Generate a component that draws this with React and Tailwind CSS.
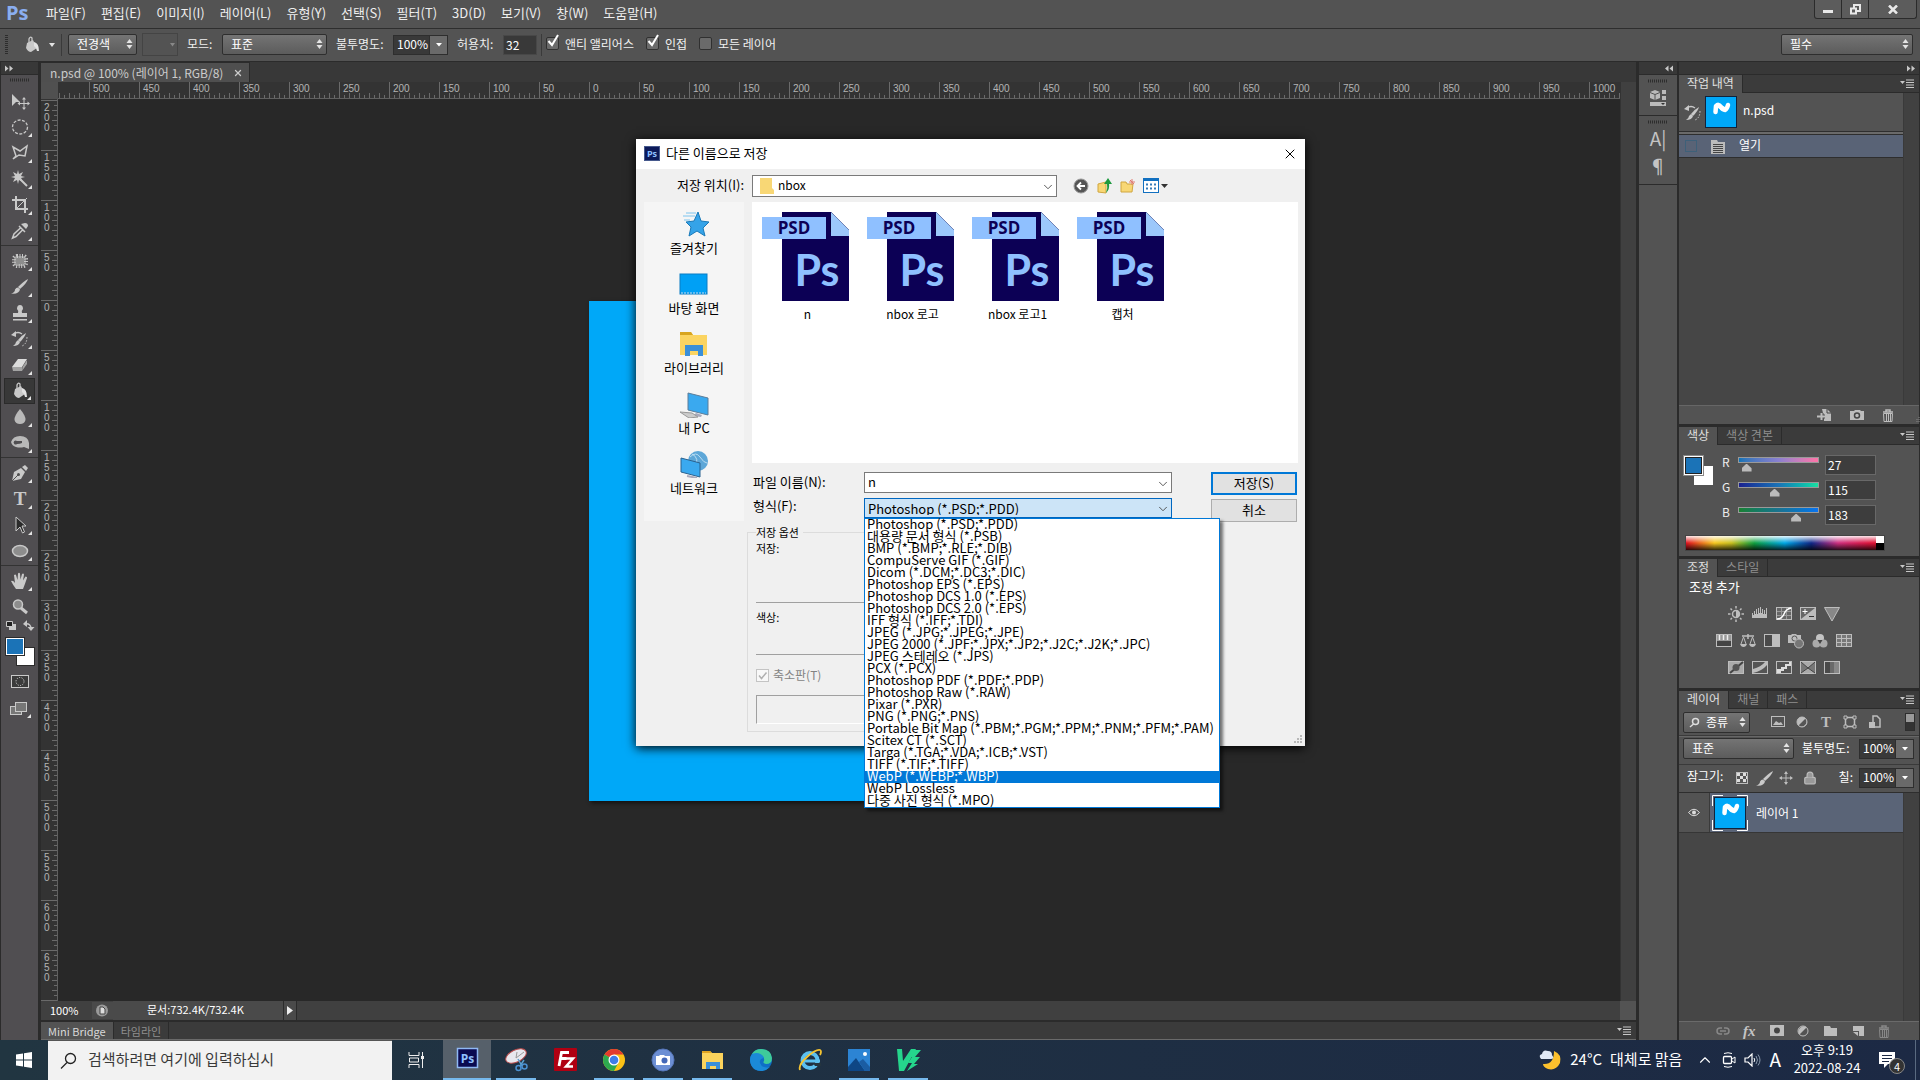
import { useState } from 'react'
import { ChevronDown, ChevronUp, Lock, X } from 'lucide-react'

const menus = ['파일(F)', '편집(E)', '이미지(I)', '레이어(L)', '유형(Y)', '선택(S)', '필터(T)', '3D(D)', '보기(V)', '창(W)', '도움말(H)']

const formats = [
  'Photoshop (*.PSD;*.PDD)',
  '대용량 문서 형식 (*.PSB)',
  'BMP (*.BMP;*.RLE;*.DIB)',
  'CompuServe GIF (*.GIF)',
  'Dicom (*.DCM;*.DC3;*.DIC)',
  'Photoshop EPS (*.EPS)',
  'Photoshop DCS 1.0 (*.EPS)',
  'Photoshop DCS 2.0 (*.EPS)',
  'IFF 형식 (*.IFF;*.TDI)',
  'JPEG (*.JPG;*.JPEG;*.JPE)',
  'JPEG 2000 (*.JPF;*.JPX;*.JP2;*.J2C;*.J2K;*.JPC)',
  'JPEG 스테레오 (*.JPS)',
  'PCX (*.PCX)',
  'Photoshop PDF (*.PDF;*.PDP)',
  'Photoshop Raw (*.RAW)',
  'Pixar (*.PXR)',
  'PNG (*.PNG;*.PNS)',
  'Portable Bit Map (*.PBM;*.PGM;*.PPM;*.PNM;*.PFM;*.PAM)',
  'Scitex CT (*.SCT)',
  'Targa (*.TGA;*.VDA;*.ICB;*.VST)',
  'TIFF (*.TIF;*.TIFF)',
  'WebP (*.WEBP;*.WBP)',
  'WebP Lossless',
  '다중 사진 형식 (*.MPO)',
]

/* ---------- small shared pieces ---------- */

const Svg = ({ w = 20, h = 20, children, className = '' }) => (
  <svg width={w} height={h} viewBox={`0 0 ${w} ${h}`} fill="none" className={`shrink-0 ${className}`} aria-hidden="true">
    {children}
  </svg>
)

const Grip = ({ vertical = false }) =>
  vertical ? (
    <Svg w={3} h={20}>
      <path d="M1.500 0v20" stroke="#2d2d2d" strokeWidth="3" strokeDasharray="1 1" />
    </Svg>
  ) : (
    <Svg w={20} h={4}>
      <path d="M0 2h20" stroke="#2d2d2d" strokeWidth="3" strokeDasharray="1 1" />
    </Svg>
  )

const DoubleArrow = ({ left = false }) => (
  <Svg w={8} h={7} className={left ? 'rotate-180' : ''}>
    <path d="M0 0.500l3.500 3-3.500 3zM4.500 0.500l3.500 3-3.500 3z" fill="#c8c8c8" />
  </Svg>
)

const UpDown = () => (
  <Svg w={7} h={10} className="pointer-events-none absolute right-1 top-[5px]">
    <path d="M3.500 0L6.500 4h-6zM3.500 10L0.500 6h6z" fill="#e4e4e4" />
  </Svg>
)

const DarkSelect = ({ label, value, className = '', pad = 'pl-2' }) => (
  <div className={`relative h-[21px] ${className}`}>
    <select
      aria-label={label}
      className={`h-full w-full appearance-none rounded-[2px] border border-[#2e2e2e] bg-linear-to-b from-[#747474] to-[#5c5c5c] ${pad} pb-0.5 pr-3 text-[12px] text-white outline-none`}
    >
      <option>{value}</option>
    </select>
    <UpDown />
  </div>
)

const PercentBox = ({ label, value }) => (
  <div className="flex h-[20px] w-[55px] border border-[#2e2e2e]">
    <input aria-label={label} defaultValue={value} className="w-[35px] bg-[#393939] pb-px pl-[3px] text-[12px] text-white outline-none" />
    <button aria-label={`${label} 조절`} className="flex flex-1 items-center justify-center border-l border-[#2e2e2e] bg-[#6a6a6a]">
      <Svg w={6} h={4}>
        <path d="M0 0h6L3 3.500z" fill="#fff" />
      </Svg>
    </button>
  </div>
)

const DarkCheck = ({ id, label, checked }) => (
  <div className="flex items-center gap-1.5">
    <span className="relative h-[13px] w-[13px]">
      <input
        id={id}
        type="checkbox"
        defaultChecked={checked}
        className="peer block h-[13px] w-[13px] appearance-none rounded-[2px] border border-[#303030] bg-[#6a6a6a]"
      />
      <svg width="15" height="14" viewBox="0 0 15 14" className="pointer-events-none absolute -top-1 left-0 hidden peer-checked:block">
        <path d="M2.500 8l3.500 4 6-10" stroke="#fff" strokeWidth="2" fill="none" />
      </svg>
    </span>
    <label htmlFor={id}>{label}</label>
  </div>
)

const PanelMenu = () => (
  <button aria-label="패널 메뉴" className="ml-auto mr-[5px] flex items-center">
    <Svg w={14} h={9}>
      <path d="M0 2h5L2.500 5z" fill="#c8c8c8" />
      <path d="M6 1h8M6 3.500h8M6 6h8M6 8.500h8" stroke="#c8c8c8" />
    </Svg>
  </button>
)

const PanelTabs = ({ tabs }) => (
  <div className="flex h-[18px] shrink-0 bg-[#3b3b3b]">
    {tabs.map((t, i) => (
      <button
        key={t}
        className={`border-r border-[#2b2b2b] px-2 text-[12px] leading-4 ${i === 0 ? 'bg-[#535353] pb-0.5 text-[#e0e0e0]' : 'border-b pb-px text-[#8f8f8f]'}`}
      >
        {t}
      </button>
    ))}
    <div className="flex flex-1 border-b border-[#2b2b2b]">
      <PanelMenu />
    </div>
  </div>
)

const Thumb = () => (
  <Svg w={32} h={32}>
    <rect x="0.500" y="0.500" width="31" height="31" fill="#00a8f8" stroke="#10233c" />
    <path d="M10.500 16l.500-6q2.500-2.500 4.500.500 2 3.500 4.500 3.500 2-1 3-5" stroke="#fff" strokeWidth="4.500" strokeLinecap="round" strokeLinejoin="round" />
    <path d="M13 7l7 4v5l-7-4z" fill="#fff" />
  </Svg>
)

/* ---------- tool icons ---------- */

const Bucket = () => (
  <>
    <path d="M5 8l6-3 4 8-6 4q-3 0-5-4z" fill="#c9c9c9" />
    <path d="M7 9V4q1-3 3-1v6" stroke="#c9c9c9" strokeWidth="1.300" />
    <path d="M12 7q5 1 5 9h-2q0-3-3-5z" fill="#e3e3e3" />
  </>
)

const Brush = () => (
  <>
    <path d="M18 2q-1 4-8 10l-2-2Q14 4 18 2z" fill="#c9c9c9" />
    <path d="M8 10.500l2 2q-1 5-9 4 4-1 4-4 1-2 3-2z" fill="#c9c9c9" />
  </>
)

const HistoryBrush = () => (
  <>
    <path d="M16 4q-1 4-6 9l-2-2q4-5 8-7z" fill="#c9c9c9" />
    <path d="M8 11l2 2q-1 4-7 4 3-2 3-4z" fill="#c9c9c9" />
    <path d="M4 5q4-3 8 0" stroke="#c9c9c9" strokeWidth="1.500" />
    <path d="M1 6l5-4v6z" fill="#c9c9c9" />
    <path d="M17 8q0 7-5 9" stroke="#c9c9c9" strokeDasharray="1.500 1.500" />
  </>
)

const tools = [
  { name: '이동', icon: <><path d="M2 3l8 8H6l-4 4z" fill="#c9c9c9" /><path d="M14 8v9M9.500 12.500h9" stroke="#c9c9c9" /><path d="M14 6l2 2.500h-4zM14 19l2-2.500h-4zM7.500 12.500l2.500-2v4zM20 12.500l-2.500-2v4z" fill="#c9c9c9" /></>, plain: true },
  { name: '선택 윤곽', icon: <ellipse cx="10" cy="10" rx="7.500" ry="7" stroke="#c9c9c9" strokeWidth="1.300" strokeDasharray="3 1.500" /> },
  { name: '올가미', icon: <path d="M3 4l7 4 7-5-2 10-6-1-6 4 3-3z" stroke="#c9c9c9" strokeWidth="1.500" /> },
  { name: '자동 선택', icon: <><path d="M8 1l1 4 4-2-2 4 4 1-4 1 2 4-4-2-1 4-1-4-4 2 2-4-4-1 4-1-2-4 4 2z" fill="#c9c9c9" /><path d="M10 10l7 7" stroke="#c9c9c9" strokeWidth="2" /></> },
  { name: '자르기', icon: <><path d="M6 1v13h12M2 5h13v13" stroke="#c9c9c9" strokeWidth="2" /><path d="M7 13L17 3" stroke="#c9c9c9" /></> },
  { name: '스포이드', icon: <><path d="M11 3l5 5 2-3q0-3-3-3z" fill="#c9c9c9" /><path d="M9 5l6 6M11 6.500L4 13l-1.500 4L6 15.500l7-7" stroke="#c9c9c9" strokeWidth="1.500" /></>, end: true },
  { name: '복구', icon: <><rect x="4" y="5" width="12" height="10" rx="3" fill="#8d8d8d" stroke="#c9c9c9" strokeWidth="4" strokeDasharray="1 1.500" /></> },
  { name: '브러시', icon: <Brush /> },
  { name: '도장', icon: <path d="M8 10q1-2-1-4 0-4 3-4t3 4q-2 2-1 4h5v4H3v-4zM3 16h14v1.500H3z" fill="#c9c9c9" /> },
  { name: '작업 내역 브러시', icon: <HistoryBrush /> },
  { name: '지우개', icon: <><path d="M2 12l6-8h9l-5 8z" fill="#dcdcdc" /><path d="M2 12h10v4H3zM12.500 12l4.500-7v4l-5 7z" fill="#a3a3a3" /></> },
  { name: '페인트 통', icon: <Bucket />, active: true },
  { name: '흐림 효과', icon: <path d="M10 2q6 7 5.500 11-1 4-5.500 4t-5.500-4Q4 9 10 2z" fill="#b9b9b9" /> },
  { name: '스펀지', icon: <path fillRule="evenodd" d="M1 9q2-6 9-6 8 0 9 7v6l-5-2q-4 1-8 0-4-1-5-5zm6-1a2 2 0 100 3q3 0 5-1V8z" fill="#b9b9b9" />, end: true },
  { name: '펜', icon: <><path d="M2 18l2-9 7-4 4 4-4 7z" fill="#c9c9c9" /><path d="M12 4l3-2 3 3-2 3z" fill="#c9c9c9" /><path d="M2 18l6-6" stroke="#505050" /><circle cx="8.500" cy="11.500" r="1.500" fill="#505050" /></> },
  { name: '문자', icon: <text x="10" y="16" textAnchor="middle" fontFamily="Liberation Serif" fontWeight="bold" fontSize="19" fill="#c9c9c9">T</text> },
  { name: '패스 선택', icon: <path d="M6 2v14l4-4 2.500 6 2-1-2.500-6h4z" fill="#2b2b2b" stroke="#c9c9c9" /> },
  { name: '타원', icon: <ellipse cx="10" cy="10" rx="7.500" ry="5.500" fill="#8d8d8d" stroke="#c9c9c9" strokeWidth="1.500" />, end: true },
  { name: '손', icon: <path d="M6 18q-3-4-5-8 2-1 4 2L4 4q1.500-1 2 0l1.500 5L8 2.500q1-1.500 2 0l.500 6 1.500-5.500q1.500-1 2 .500L13 9.500l2.500-4q2 0 1.500 1.500-2 6-4 11z" fill="#c9c9c9" /> },
  { name: '돋보기', icon: <><circle cx="8" cy="7.500" r="4.500" fill="#8d8d8d" stroke="#c9c9c9" strokeWidth="1.500" /><path d="M11 11l6 5" stroke="#c9c9c9" strokeWidth="3" /></>, plain: true },
]

const Toolbar = () => (
  <aside className="flex w-[39px] shrink-0 flex-col border-x border-[#2b2b2b] bg-[#504e51]">
    <div className="flex h-[13px] items-center border-b border-[#2b2b2b] bg-[#383838] pl-1">
      <DoubleArrow />
    </div>
    <div className="flex h-[13px] items-start justify-center pt-[3px]">
      <Grip />
    </div>
    {tools.map((t) => (
      <div key={t.name} className={t.end ? 'mb-0.5 border-b border-[#333] pb-px' : ''}>
        <button
          aria-label={t.name}
          className={`relative mx-auto flex h-[26px] w-[31px] items-center justify-center ${t.active ? 'border border-[#2b2b2b] bg-[#383838]' : ''}`}
        >
          <Svg w={20} h={20}>{t.icon}</Svg>
          {!t.plain && (
            <svg width="4" height="4" viewBox="0 0 4 4" className="absolute bottom-[3px] right-[3px]">
              <path d="M4 0v4H0z" fill="#e4e4e4" />
            </svg>
          )}
        </button>
      </div>
    ))}
    <div className="flex flex-col items-center">
      <Svg w={30} h={11}>
        <path d="M4 4h7v6H4z" fill="#c9c9c9" />
        <path d="M1.500 1.500h6v5h-6z" fill="#222" stroke="#c9c9c9" />
        <path d="M20 4q6-1 6 5" stroke="#c9c9c9" strokeWidth="1.500" />
        <path d="M18 4l4-4v7zM22.500 7h7L26 11z" fill="#c9c9c9" />
      </Svg>
      <Svg w={32} h={32} className="mt-1">
        <rect x="12.500" y="12.500" width="18" height="18" fill="#fff" stroke="#2b2b2b" />
        <rect x="1.500" y="2.500" width="19" height="18" fill="#fff" stroke="#2b2b2b" />
        <rect x="3" y="4" width="16" height="15" fill="#1b73b7" />
      </Svg>
      <Svg w={18} h={13} className="mt-2">
        <rect x="0.500" y="0.500" width="17" height="12" fill="#3b3b3b" stroke="#c9c9c9" />
        <circle cx="9" cy="6.500" r="4" stroke="#e4e4e4" strokeDasharray="1 1.500" />
      </Svg>
      <Svg w={22} h={16} className="mt-3.5">
        <rect x="1.500" y="4.500" width="11" height="8" fill="#777" stroke="#c9c9c9" />
        <rect x="6.500" y="0.500" width="11" height="9" fill="#777" stroke="#c9c9c9" />
        <path d="M22 12v4h-4z" fill="#e4e4e4" />
      </Svg>
    </div>
  </aside>
)

/* ---------- top bars ---------- */

const MenuBar = () => (
  <header className="flex h-[29px] shrink-0 items-start border-b border-[#2e2e2e] bg-[#535353]">
    <span className="w-[46px] pl-1.5 font-['Open_Sans',sans-serif] text-[20px] font-bold leading-[25px] text-[#8aaef0]">Ps</span>
    <nav className="flex gap-[15px]">
      {menus.map((m) => (
        <button key={m} className="text-[13px] leading-[25px] text-[#eee]">{m}</button>
      ))}
    </nav>
    <div className="ml-auto mr-[3px] flex h-[19px] rounded-b-[3px] border border-t-0 border-[#2b2b2b] bg-[#5c5c5c]">
      <button aria-label="최소화" className="flex w-[27px] items-center justify-center border-r border-[#2b2b2b]">
        <Svg w={12} h={10}><path d="M1 6h10v3H1z" fill="#e8e8e8" /></Svg>
      </button>
      <button aria-label="이전 크기로" className="flex w-[27px] items-center justify-center border-r border-[#2b2b2b]">
        <Svg w={13} h={11}>
          <path d="M5 1h6v6H5z" stroke="#e8e8e8" strokeWidth="2" />
          <path d="M2 4.500h5v5H2z" fill="#5c5c5c" stroke="#e8e8e8" strokeWidth="2" />
        </Svg>
      </button>
      <button aria-label="닫기" className="flex w-[47px] items-center justify-center">
        <Svg w={10} h={9}><path d="M1 0.500l8 8M9 0.500l-8 8" stroke="#e8e8e8" strokeWidth="2.500" /></Svg>
      </button>
    </div>
  </header>
)

const OptionsBar = () => (
  <div className="flex h-[33px] shrink-0 items-center border-b border-[#2b2b2b] bg-[#535353] pb-px pl-[5px] text-[12px] text-[#f0f0f0]">
    <Grip vertical />
    <button aria-label="페인트 통 도구" className="ml-3.5 flex w-[33px] items-center justify-between">
      <Svg w={20} h={20}><Bucket /></Svg>
      <Svg w={6} h={4}><path d="M0 0h6L3 4z" fill="#e4e4e4" /></Svg>
    </button>
    <div className="mx-1.5 h-[22px] w-px bg-[#3a3a3a]" />
    <DarkSelect label="칠 소스" value="전경색" className="w-[69px]" />
    <div className="ml-[5px] flex h-[23px] w-[36px] items-center justify-end border border-[#444] pr-0.5">
      <Svg w={5} h={4}><path d="M0 0h5L2.500 3.500z" fill="#888" /></Svg>
    </div>
    <span className="ml-[9px] w-[35px] pb-0.5">모드:</span>
    <DarkSelect label="모드" value="표준" className="w-[105px]" />
    <span className="ml-[9px] w-[57px] pb-0.5">불투명도:</span>
    <PercentBox label="불투명도" value="100%" />
    <label htmlFor="tolerance" className="ml-[9px] w-[46px] pb-0.5">허용치:</label>
    <input id="tolerance" defaultValue="32" className="h-[20px] w-[34px] border border-[#484848] bg-[#393939] pl-0.5 text-[12px] text-white outline-none" />
    <div className="mx-1 h-[22px] w-px bg-[#3a3a3a]" />
    <div className="flex gap-3 pb-0.5">
      <DarkCheck id="aa" label="앤티 앨리어스" checked />
      <DarkCheck id="contig" label="인접" checked />
      <DarkCheck id="all-layers" label="모든 레이어" />
    </div>
    <DarkSelect label="작업 영역" value="필수" className="ml-auto mr-[7px] w-[132px]" />
  </div>
)

/* ---------- document window ---------- */

const hLabels = Array.from({ length: 31 }, (_, i) => Math.abs(i * 50 - 500))
const vLabels = Array.from({ length: 18 }, (_, i) => Math.abs(i * 50 - 200))

const RulerX = () => (
  <div className="relative h-[17px] flex-1 overflow-hidden border-b border-[#606060] bg-[#333]">
    <svg className="absolute inset-0 h-full w-full" aria-hidden="true">
      <pattern id="rx" x="31" width="50" height="17" patternUnits="userSpaceOnUse">
        <path d="M0.500 0v17" stroke="#6a6a6a" />
        <path d="M10.500 11v6M20.500 11v6M30.500 11v6M40.500 11v6M5.500 13v4M15.500 13v4M25.500 13v4M35.500 13v4M45.500 13v4" stroke="#6a6a6a" />
      </pattern>
      <rect width="100%" height="100%" fill="url(#rx)" />
    </svg>
    <div className="relative flex pl-[31px] font-['Liberation_Sans',sans-serif]">
      {hLabels.map((n, i) => (
        <span key={i} className="w-[50px] shrink-0 pl-1 text-[10px] leading-[14px] text-[#b4b4b4]">{n}</span>
      ))}
    </div>
  </div>
)

const RulerY = () => (
  <div className="relative w-[17px] shrink-0 overflow-hidden border-r border-[#606060] bg-[#333]">
    <svg className="absolute inset-0 h-full w-full" aria-hidden="true">
      <pattern id="ry" y="1" width="17" height="50" patternUnits="userSpaceOnUse">
        <path d="M0 0.500h17" stroke="#6a6a6a" />
        <path d="M11 10.500h6M11 20.500h6M11 30.500h6M11 40.500h6M13 5.500h4M13 15.500h4M13 25.500h4M13 35.500h4M13 45.500h4" stroke="#6a6a6a" />
      </pattern>
      <rect width="100%" height="100%" fill="url(#ry)" />
    </svg>
    <div className="relative pt-px font-['Liberation_Sans',sans-serif]">
      {vLabels.map((n, i) => (
        <div key={i} className="flex h-[50px] flex-col pl-[3px] pt-[3px] text-[10px] leading-[10px] text-[#b4b4b4]">
          {String(n).split('').map((d, j) => <span key={j}>{d}</span>)}
        </div>
      ))}
    </div>
  </div>
)

const DocumentArea = () => (
  <main className="ml-[2px] flex min-w-0 flex-1 flex-col bg-[#2b2b2b]">
    <div className="flex h-[20px] shrink-0 bg-[#383838]">
      <div className="flex items-center gap-2.5 border-r border-t border-[#2b2b2b] bg-[#4f4f4f] pl-[9px] pr-1.5 text-[12px] text-[#ccc]">
        <span className="whitespace-nowrap">n.psd @ 100% (레이어 1, RGB/8)</span>
        <button aria-label="탭 닫기" className="flex"><X className="h-2.5 w-2.5" strokeWidth={3} /></button>
      </div>
    </div>
    <div className="flex min-h-0 flex-1">
      <div className="flex min-w-0 flex-1 flex-col">
        <div className="flex">
          <div className="h-[17px] w-[17px] bg-[#505050]" />
          <RulerX />
        </div>
        <div className="flex min-h-0 flex-1">
          <RulerY />
          <div className="relative flex-1 overflow-hidden bg-[#282828]">
            <div className="absolute left-[531px] top-[202px] h-[500px] w-[500px] bg-[#00a8f8] shadow-[2px_2px_4px_#111]" />
          </div>
        </div>
      </div>
      <div className="w-4 border-l border-[#333] bg-[#404040]" />
    </div>
    <div className="flex h-[19px] shrink-0 items-center bg-[#404040] text-[11px] text-white">
      <span className="w-[51px] pl-[9px]">100%</span>
      <Svg w={21} h={17} className="bg-[#4a4a4a]">
        <circle cx="10" cy="8.500" r="6" fill="#9a9a9a" />
        <path d="M8 5h3l2 2v5H8z" fill="#ddd" stroke="#444" />
      </Svg>
      <span className="h-full w-[171px] border-r border-[#2b2b2b] bg-[#4a4a4a] pl-[34px] leading-[17px]">문서:732.4K/732.4K</span>
      <button aria-label="상태 메뉴" className="flex h-full w-[13px] items-center justify-center border-r border-[#2b2b2b] bg-[#4a4a4a]">
        <Svg w={6} h={9}><path d="M0 0l6 4.500L0 9z" fill="#eee" /></Svg>
      </button>
      <div className="ml-auto h-full w-4 bg-[#535353]" />
    </div>
    <div className="mt-0.5 flex h-[18px] shrink-0 border-b border-[#6a6a6a] bg-[#3b3b3b] text-[11px]">
      <button className="bg-[#535353] px-[7px] leading-[14px] text-[#d8d8d8]">Mini Bridge</button>
      <button className="border-x border-[#2b2b2b] px-[7px] leading-[14px] text-[#8f8f8f]">타임라인</button>
      <PanelMenu />
    </div>
  </main>
)

/* ---------- right side ---------- */

const IconStrip = () => (
  <div className="ml-[3px] w-[38px] shrink-0 bg-[#535353]">
    <div className="flex h-[13px] items-center justify-end border-b border-[#2b2b2b] bg-[#383838] pr-1">
      <DoubleArrow left />
    </div>
    <div className="flex h-[41px] flex-col items-center border-b border-[#2b2b2b] pt-1">
      <Grip />
      <button aria-label="속성" className="mt-1.5">
        <Svg w={16} h={18}>
          <path d="M5 1l5 2v6l-5 2-5-2V3z" fill="#bbb" />
          <path d="M0 3.500l5 2 5-2M5 5.500V11" stroke="#535353" />
          <path d="M12 1h4v4h-4zM12 7h4v4h-4zM0 13h16v4H0z" fill="#bbb" />
          <path d="M11 14h4l-2 2z" fill="#333" />
        </Svg>
      </button>
    </div>
    <div className="flex h-[69px] flex-col items-center border-b border-[#2b2b2b] pt-1">
      <Grip />
      <button aria-label="문자" className="text-[19px] leading-[28px] text-[#c4c4c4]">A|</button>
      <button aria-label="단락" className="text-[19px] leading-[28px] text-[#c4c4c4]">¶</button>
    </div>
  </div>
)

const Trash = ({ color = '#bdbdbd' }) => (
  <Svg w={12} h={13}>
    <path d="M1 3h10M4 2.500V1h4v1.500" stroke={color} strokeWidth="1.500" />
    <path d="M1.500 4.500h9L10 12.500H2zM4.500 5v7M6.500 5v7M8.500 5v7" stroke={color} />
  </Svg>
)

const HistoryPanel = () => (
  <section className="flex flex-col">
    <PanelTabs tabs={['작업 내역']} />
    <div className="flex">
      <div className="flex h-[312px] flex-1 flex-col bg-[#464646]">
        <div className="flex h-[39px] items-center border-b border-[#2e2e2e] bg-[#535353] pl-1 text-[12px] text-white">
          <Svg w={18} h={18}><HistoryBrush /></Svg>
          <span className="ml-1"><Thumb /></span>
          <span className="ml-1.5 pb-1">n.psd</span>
        </div>
        <div className="h-[2px] bg-[#6a6a6a]" />
        <div className="flex h-[24px] items-center border-y border-[#2e2e2e] bg-[#596376] pl-1.5 text-[12px] text-white">
          <input type="checkbox" aria-label="작업 내역 브러시 소스" className="h-3 w-3 appearance-none border border-[#3e6079]" />
          <Svg w={14} h={15} className="ml-3.5">
            <path d="M0 1h6l1 2h7v12H0z" fill="#bbb" />
            <path d="M2 5.500h10M2 7.500h10M2 9.500h10M2 11.500h10M2 13.500h10" stroke="#444" />
          </Svg>
          <span className="ml-3.5 pb-0.5">열기</span>
        </div>
      </div>
      <div className="w-4 border-l border-[#3a3a3a] bg-[#414141]" />
    </div>
    <div className="flex h-[19px] items-center gap-[18px] border-t border-[#666] pl-[138px]">
      <Svg w={15} h={13}>
        <path d="M5 0h5l4 4v8H7V8" fill="#bdbdbd" />
        <path d="M10 0v4h4" stroke="#444" />
        <path d="M0 7.500h8M4.500 4v7" stroke="#535353" strokeWidth="4" />
        <path d="M0 7.500h8M4.500 4v7" stroke="#bdbdbd" strokeWidth="2" />
      </Svg>
      <Svg w={14} h={12}>
        <path d="M0 2h4l1-1h5l1 1h3v9H0z" fill="#bdbdbd" />
        <circle cx="7" cy="6.500" r="2.500" stroke="#444" strokeWidth="1.500" />
      </Svg>
      <Trash />
      <Svg w={10} h={10} className="ml-0.5 mt-1">
        <path d="M9 1v9M7 3v7M5 5v5M3 7v3" stroke="#888" strokeDasharray="1 1" />
      </Svg>
    </div>
  </section>
)

const channels = [
  { name: 'R', value: 27, track: 'from-[#0a73b7] via-[#8a80d0] to-[#ff73a7]' },
  { name: 'G', value: 115, track: 'from-[#1b2090] via-[#1b73b7] to-[#1be0a0]' },
  { name: 'B', value: 183, track: 'from-[#1b8030] via-[#1b7390] to-[#0b73f0]' },
]

const ColorPanel = () => (
  <section>
    <PanelTabs tabs={['색상', '색상 견본']} />
    <div className="h-[111px]">
      <div className="flex pt-2.5">
        <Svg w={32} h={32} className="ml-1">
          <path d="M11 11h19v19H11z" fill="#fff" />
          <rect x="0.500" y="0.500" width="20" height="20" fill="#fff" stroke="#888" />
          <rect x="2.500" y="2.500" width="16" height="16" fill="#1b73b7" stroke="#222" />
        </Svg>
        <div className="ml-[7px] flex flex-col gap-[5px]">
          {channels.map((c) => (
            <div key={c.name} className="flex h-[20px] text-[12px] leading-[14px] text-[#eee]">
              <label htmlFor={`ch-${c.name}`} className="w-4">{c.name}</label>
              <div className="w-[81px] pt-0.5">
                <div className={`h-[6px] border border-[#999] bg-linear-to-r ${c.track}`} />
                <input
                  id={`ch-${c.name}`}
                  type="range"
                  min="0"
                  max="255"
                  defaultValue={c.value}
                  className="-mx-[5px] block h-[9px] w-[91px] appearance-none bg-transparent [&::-webkit-slider-thumb]:h-[8px] [&::-webkit-slider-thumb]:w-[10px] [&::-webkit-slider-thumb]:appearance-none [&::-webkit-slider-thumb]:bg-[#bbb] [&::-webkit-slider-thumb]:[clip-path:polygon(50%_0,100%_60%,100%_100%,0_100%,0_60%)]"
                />
              </div>
              <input aria-label={`${c.name} 값`} defaultValue={c.value} className="ml-1.5 h-[20px] w-[51px] border border-[#686868] bg-[#3d3d3d] pb-px pl-0.5 text-[12px] text-white outline-none" />
            </div>
          ))}
        </div>
      </div>
      <div className="ml-1.5 mt-[10px] flex h-[16px] w-[200px] border border-[#444]">
        <div className="flex-1 bg-[linear-gradient(to_bottom,#ffffffe6,transparent_50%,#000c),linear-gradient(to_right,#e01020,#f8c820_15%,#c8c020_24%,#10a040_36%,#00a8e8_52%,#102888_66%,#d03080_80%,#e01030)]" />
        <div className="flex w-2 flex-col">
          <div className="flex-1 bg-white" />
          <div className="flex-1 bg-black" />
        </div>
      </div>
    </div>
  </section>
)

const g = '#bdbdbd'
const Box = ({ children, fill = '#666' }) => (
  <>
    <rect x="0.500" y="1.500" width="15" height="12" fill={fill} stroke={g} />
    {children}
  </>
)

const adjustments = [
  [
    <><circle cx="8" cy="8" r="3.500" stroke={g} strokeWidth="1.500" /><path d="M8 4.500a3.500 3.500 0 010 7z" fill={g} /><path d="M8 0v2.500M8 13.500V16M0 8h2.500M13.500 8H16M2.500 2.500l1.500 1.500M12 12l1.500 1.500M2.500 13.500L4 12M12 4l1.500-1.500" stroke={g} strokeWidth="1.500" /></>,
    <path d="M0 12V7h1v2h1V5h1v3h1V3h1v5h1V2h1v5h1V1h1v6h1V3h1v5h1V4h1v4h1V2h1v10z" fill={g} />,
    <Box><path d="M5.500 2v11M10.500 2v11M1 5.500h14M1 9.500h14" stroke="#999" /><path d="M1 13q5 0 7-5t7-6" stroke="#fff" strokeWidth="1.500" /></Box>,
    <Box><path d="M15 2v11H1z" fill={g} /><path d="M2.500 5.500h5M5 3v5" stroke="#fff" /><path d="M9 10.500h5" stroke="#333" /></Box>,
    <path d="M0.500 1.500h15L8 15z" fill="#888" stroke={g} />,
  ],
  [
    <Box fill="#999"><path d="M1 8h14v5H1z" fill="#444" /><path d="M3.500 2v5M7.500 2v5M11.500 2v5" stroke="#eee" strokeWidth="1.500" /></Box>,
    <><path d="M2 3h12M8 1v5" stroke={g} strokeWidth="1.500" /><path d="M3.500 4L1 11M3.500 4L6 11M12.500 4L10 11M12.500 4L15 11" stroke={g} /><path d="M0 11h7q-1 3-3.500 3T0 11zM9 11h7q-1 3-3.500 3T9 11z" fill={g} /></>,
    <Box fill="#4a4a4a"><path d="M8 2h7v11H8z" fill={g} /></Box>,
    <><path d="M0 2h3l1-1h4l1 1h4v8H0z" fill={g} /><circle cx="6.500" cy="5.500" r="2.500" stroke="#555" /><circle cx="11" cy="10.500" r="4.500" fill="#777" stroke={g} /></>,
    <><circle cx="8" cy="5" r="4" fill="#c4c4c4" /><circle cx="4.500" cy="10.500" r="4" fill="#aaa" /><circle cx="11.500" cy="10.500" r="4" fill="#aaa" /><path d="M5.500 7h5L8 11z" fill="#444" /></>,
    <Box fill="#777"><path d="M5.500 2v11M10.500 2v11M1 5.500h14M1 9.500h14" stroke={g} /></Box>,
  ],
  [
    <Box fill="#aaa"><path d="M2 13L15 2" stroke="#444" strokeWidth="2" /><circle cx="8" cy="7.500" r="3.500" fill="#555" /></Box>,
    <Box fill="#555"><path d="M1 9Q9 7 13 2h2v3q-5 6-14 8z" fill={g} /></Box>,
    <Box fill="#555"><path d="M1 9h4V7h4V4h4V2h2v4h-4v3H8v2H5v2H1z" fill="#ddd" /></Box>,
    <Box fill="#777"><path d="M1 2l7 6 7-6M1 13l7-5 7 5" fill="#aaa" stroke="#444" /></Box>,
    <Box fill="#888"><path d="M1 2h5v11H1z" fill="#4a4a4a" /><path d="M6 2h4v11H6z" fill="#6a6a6a" /></Box>,
  ],
]

const AdjustPanel = () => (
  <section>
    <PanelTabs tabs={['조정', '스타일']} />
    <div className="flex h-[111px] flex-col">
      <p className="pl-2.5 text-[13px] leading-5 text-white">조정 추가</p>
      <div className="mr-[30px] mt-[9px] flex flex-col gap-[11px]">
        {adjustments.map((row, i) => (
          <div key={i} className="flex justify-center gap-2">
            {row.map((icon, j) => (
              <button key={j} aria-label={`조정 ${i + 1}-${j + 1}`}><Svg w={16} h={16}>{icon}</Svg></button>
            ))}
          </div>
        ))}
      </div>
    </div>
  </section>
)

const LayersPanel = () => (
  <section className="flex min-h-0 flex-1 flex-col text-[12px] text-white">
    <PanelTabs tabs={['레이어', '채널', '패스']} />
    <div className="flex h-[27px] shrink-0 items-center border-b border-[#3a3a3a] px-1">
      <div className="relative">
        <DarkSelect label="필터 종류" value="종류" className="w-[67px]" pad="pl-[22px]" />
        <svg width="11" height="11" viewBox="0 0 11 11" fill="none" className="pointer-events-none absolute left-1.5 top-[5px]">
          <circle cx="6.500" cy="4.500" r="3" stroke="#ddd" strokeWidth="1.500" />
          <path d="M4.500 7L1 10" stroke="#ddd" strokeWidth="1.500" />
        </svg>
      </div>
      <div className="ml-[21px] flex gap-2.5">
        <Svg w={14} h={14}><rect x="0.500" y="1.500" width="13" height="10" stroke={g} /><path d="M2 10l3-4 3 2 2-1 2 3z" fill={g} /></Svg>
        <Svg w={14} h={14}><circle cx="7" cy="7" r="5" fill={g} /><path d="M3.500 10.500a5 5 0 007-7z" fill="#555" /><circle cx="7" cy="7" r="5" stroke={g} /></Svg>
        <Svg w={14} h={14}><text x="7" y="12" textAnchor="middle" fontFamily="Liberation Serif" fontWeight="bold" fontSize="15" fill={g}>T</text></Svg>
        <Svg w={14} h={14}><path d="M2.500 2.500h9v9h-9z" stroke={g} strokeWidth="1.500" /><path d="M1 1h3v3H1zM10 1h3v3h-3zM1 10h3v3H1zM10 10h3v3h-3z" fill="#555" stroke={g} /></Svg>
        <Svg w={14} h={14}><path d="M6 1h4l3 3v8H6z" stroke={g} strokeWidth="1.500" /><path d="M2 7h6v6H2z" fill={g} /></Svg>
      </div>
      <button aria-label="필터 켜기" className="ml-auto h-[18px] w-[10px] border border-[#2e2e2e] bg-linear-to-b from-[#999] from-50% to-[#333] to-50%" />
    </div>
    <div className="flex h-[28px] shrink-0 items-center border-t border-[#666] pb-1 pl-1 pr-[5px]">
      <DarkSelect label="혼합 모드" value="표준" className="w-[111px]" />
      <span className="ml-2 mr-auto whitespace-nowrap pb-0.5">불투명도:</span>
      <PercentBox label="레이어 불투명도" value="100%" />
    </div>
    <div className="flex h-[29px] shrink-0 items-center border-y border-t-[#3a3a3a] border-b-[#2e2e2e] pb-0.5 pl-2 pr-[5px]">
      <span className="w-[48px] pb-1">잠그기:</span>
      <div className="flex items-center gap-1.5">
        <Svg w={14} h={14}>
          <rect x="1.500" y="1.500" width="11" height="11" fill="#555" stroke={g} />
          <path d="M2 2h3v3H2zM8 2h3v3H8zM5 5h3v3H5zM11 5h1v3h-1zM2 8h3v3H2zM8 8h3v3H8z" fill="#ddd" />
        </Svg>
        <Svg w={18} h={18}><Brush /></Svg>
        <Svg w={14} h={14}>
          <path d="M7 1v12M1 7h12" stroke={g} />
          <path d="M7 0l2 3H5zM7 14l2-3H5zM0 7l3-2v4zM14 7l-3-2v4z" fill={g} />
        </Svg>
        <Lock className="ml-1 h-3.5 w-3.5 text-[#bdbdbd]" fill="#999" />
      </div>
      <span className="ml-auto mr-1.5 pb-0.5">칠:</span>
      <PercentBox label="칠" value="100%" />
    </div>
    <div className="flex min-h-0 flex-1">
      <div className="flex-1 bg-[#464646]">
        <div className="flex h-[40px] items-center border-b border-[#363636] bg-[#5a6477]">
          <button aria-label="레이어 표시" className="flex h-full w-[31px] items-center justify-center border-r border-[#3a3a3a] bg-[#535353]">
            <Svg w={12} h={9}>
              <path d="M0.500 4.500q5.500-6.500 11 0-5.500 6.500-11 0z" stroke="#ddd" />
              <circle cx="6" cy="4.500" r="2" fill="#ddd" />
            </Svg>
          </button>
          <span className="relative ml-0.5 p-0.5">
            <Thumb />
            <svg width="36" height="36" viewBox="0 0 36 36" fill="none" className="absolute inset-0">
              <path d="M0.500 11V0.500H11M25 0.500h10.500V11M35.500 25v10.500H25M11 35.500H0.500V25" stroke="#fff" />
            </svg>
          </span>
          <span className="ml-2">레이어 1</span>
        </div>
      </div>
      <div className="w-4 border-l border-[#3a3a3a] bg-[#414141]" />
    </div>
    <div className="flex h-[19px] shrink-0 items-center gap-[13px] border-t border-[#6a6a6a] pl-[37px]">
      <Svg w={14} h={10}><path d="M6 2H4a3 3 0 000 6h2M8 2h2a3 3 0 010 6H8M4 5h6" stroke="#888" strokeWidth="1.500" /></Svg>
      <span className="w-[14px] font-['Liberation_Serif',serif] text-[15px] font-bold italic leading-4 text-[#c4c4c4]">fx</span>
      <Svg w={14} h={12}><path d="M0 0h14v11H0z" fill={g} /><circle cx="7" cy="5.500" r="3" fill="#444" /></Svg>
      <Svg w={14} h={14}><circle cx="6" cy="7" r="5" stroke={g} /><path d="M2.500 10.500a5 5 0 017-7z" fill={g} /></Svg>
      <Svg w={14} h={12}><path d="M0 1h6l1 2h6v8H0z" fill={g} /></Svg>
      <Svg w={14} h={12}><path d="M2 1h11v10H8V6H2z" fill={g} /><path d="M2 7h5v4z" fill={g} /></Svg>
      <Trash color="#888" />
    </div>
  </section>
)

const Panels = () => (
  <div className="ml-[2px] flex w-[241px] shrink-0 flex-col gap-[3px] border-r border-[#2b2b2b] bg-[#2b2b2b] [&>section]:bg-[#535353]">
    <div>
      <div className="flex h-[13px] items-center justify-end border-b border-[#2b2b2b] bg-[#383838] pr-1">
        <DoubleArrow />
      </div>
      <div className="bg-[#535353]"><HistoryPanel /></div>
    </div>
    <ColorPanel />
    <AdjustPanel />
    <LayersPanel />
  </div>
)

/* ---------- save dialog ---------- */

const PsdFile = ({ name }) => (
  <button className="flex w-[105px] flex-col items-center">
    <svg width="94" height="92" viewBox="0 0 94 92" aria-hidden="true">
      <path d="M21 1h49l18 18v71H21z" fill="#0c0055" />
      <path d="M70 1l18 18v6L69 21z" fill="#070038" />
      <path d="M70 1l18 18v6H70z" fill="#9cc8fb" />
      <rect x="1" y="6" width="64" height="22" fill="#8fc0ff" />
      <text x="33" y="23" textAnchor="middle" fontFamily="Open Sans" fontWeight="bold" fontSize="17" fill="#0c0055">PSD</text>
      <text x="56" y="75" textAnchor="middle" fontFamily="Lato" fontWeight="bold" fontSize="43" fill="#8fc0ff">Ps</text>
    </svg>
    <span className="mt-px text-[12px] leading-5">{name}</span>
  </button>
)

const Monitor = () => (
  <>
    <path d="M10 3l20 5v17l-20-5z" fill="#3aa9ef" stroke="#5c7d99" />
    <path d="M18 23l6 2-1 2-8-1z" fill="#aab" />
  </>
)

const places = [
  { name: '즐겨찾기', icon: <><path d="M20 2l3 9 8 1-6 6 2 8-8-5-8 5 2-9-5-5 8-1z" fill="#35a3e8" stroke="#1979b8" /><path d="M8 3h10M5 6h12M6 10h6" stroke="#7cc4ee" /></> },
  { name: '바탕 화면', icon: <><rect x="2" y="4" width="27" height="20" fill="#00a0f5" stroke="#0b7cc4" /><path d="M3 23h25" stroke="#cde" strokeDasharray="2 1" /></> },
  { name: '라이브러리', icon: <><path d="M2 2h11l2 3h14v20H2z" fill="#fbd461" /><path d="M2 2h11l2 3H2z" fill="#d8a520" /><path d="M7 26V15h18v11h-5v-5h-8v5z" fill="#3a8fd8" /></> },
  { name: '내 PC', icon: <><Monitor /><path d="M2 22l12 1 6 4-9 1z" fill="#ccc" stroke="#999" /></> },
  { name: '네트워크', icon: <><circle cx="20" cy="11" r="10" fill="#5da7d8" /><path d="M12 7q6-6 10 0t7 6M14 4q8 4 3 14" stroke="#b8dcf2" /><path d="M3 8l19 5v14L3 22z" fill="#3aa9ef" stroke="#2b628f" /><path d="M9 26l10 2" stroke="#aab" strokeWidth="2" /></> },
]

const SaveDialog = () => {
  const [format, setFormat] = useState(21)

  return (
    <div role="dialog" aria-label="다른 이름으로 저장" className="absolute left-[636px] top-[139px] flex h-[607px] w-[669px] flex-col bg-[#f0f0f0] text-[13px] text-black shadow-[0_2px_10px_#000]">
      <div className="flex h-[30px] shrink-0 items-center bg-white pl-2 pr-[7px]">
        <Svg w={16} h={16}>
          <rect x="0.500" y="0.500" width="15" height="14" fill="#0c1a5a" stroke="#46598c" />
          <text x="8" y="11" textAnchor="middle" fontFamily="Open Sans" fontWeight="bold" fontSize="9" fill="#8fc0ff">Ps</text>
        </Svg>
        <span className="ml-1.5 pb-0.5">다른 이름으로 저장</span>
        <button aria-label="닫기" className="ml-auto"><X className="h-4 w-4" strokeWidth={1.5} /></button>
      </div>

      <div className="flex h-[33px] shrink-0 items-center">
        <label htmlFor="folder" className="w-[116px] pb-0.5 pr-2 text-right">저장 위치(I):</label>
        <div className="relative h-[22px] w-[305px]">
          <select id="folder" className="h-full w-full appearance-none border border-[#7a7a7a] bg-white pb-0.5 pl-[25px] text-[12px] outline-none">
            <option>nbox</option>
          </select>
          <svg width="14" height="16" viewBox="0 0 14 16" className="pointer-events-none absolute left-2 top-[3px]">
            <path d="M0 0h12v10l2 2v4H0z" fill="#f8d775" />
          </svg>
          <ChevronDown className="pointer-events-none absolute right-0.5 top-[5px] h-3.5 w-3.5 text-[#444]" strokeWidth={1.5} />
        </div>
        <div className="ml-4 flex items-center gap-2">
          <button aria-label="뒤로"><Svg w={16} h={16}><circle cx="8" cy="8" r="7" fill="#555" stroke="#999" /><path d="M12 8H5M8 4.500L4.500 8 8 11.500" stroke="#fff" strokeWidth="1.800" /></Svg></button>
          <button aria-label="상위 폴더"><Svg w={15} h={16}><path d="M1 6l8-2v11l-8-1z" fill="#f8d775" stroke="#d0a640" /><path d="M9 15q2-5 1-9H7l4-6 4 6h-3q1 5-3 9z" fill="#1d9a3e" /></Svg></button>
          <button aria-label="새 폴더"><Svg w={15} h={16}><path d="M1 4h5l1 2h6l-1 8H1z" fill="#f8d775" stroke="#d0a640" /><path d="M12 1v6M9 4h6M10 2l4 4" stroke="#e07a70" /></Svg></button>
          <button aria-label="보기" className="flex items-center gap-0.5">
            <Svg w={16} h={15}>
              <rect x="0.500" y="0.500" width="15" height="14" fill="#fff" stroke="#1270c0" />
              <path d="M0 1.500h16" stroke="#1270c0" strokeWidth="3" />
              <path d="M3 6.500h2M7 6.500h2M11 6.500h2M3 10.500h2M7 10.500h2M11 10.500h2" stroke="#357ab8" strokeWidth="2" />
            </Svg>
            <Svg w={7} h={4}><path d="M0 0h7L3.500 4z" fill="#333" /></Svg>
          </button>
        </div>
      </div>

      <div className="flex min-h-0 flex-1">
        <div className="ml-2 h-[319px] w-[100px] shrink-0 bg-[#f5f5f5] pt-2">
          {places.map((p) => (
            <button key={p.name} className="flex h-[60px] w-full flex-col items-center">
              <Svg w={32} h={28}>{p.icon}</Svg>
              <span className="leading-5">{p.name}</span>
            </button>
          ))}
        </div>

        <div className="ml-px min-w-0 flex-1">
          <div className="ml-[7px] mr-[7px] flex h-[261px] items-start bg-white pl-[3px] pt-[9px]">
            {['n', 'nbox 로고', 'nbox 로고1', '캡처'].map((f) => <PsdFile key={f} name={f} />)}
          </div>

          <div className="mr-2 flex pl-2 pt-[7px]">
            <div className="flex w-[111px] flex-col leading-[24px]">
              <label htmlFor="filename">파일 이름(N):</label>
              <label htmlFor="format">형식(F):</label>
            </div>
            <div className="flex flex-col gap-[5px] pt-[2px]">
              <div className="relative h-[21px] w-[308px]">
                <input id="filename" defaultValue="n" className="h-full w-full border border-[#7a7a7a] bg-white pb-0.5 pl-[3px] text-[13px] outline-none" />
                <ChevronDown className="pointer-events-none absolute right-0.5 top-[5px] h-3.5 w-3.5 text-[#444]" strokeWidth={1.5} />
              </div>
              <div className="relative h-[20px] w-[308px]">
                <select id="format" className="h-full w-full appearance-none border border-[#0067c0] bg-[#cce4f7] pb-0.5 pl-[3px] text-[13px] outline-none">
                  <option>Photoshop (*.PSD;*.PDD)</option>
                </select>
                <ChevronDown className="pointer-events-none absolute right-0.5 top-[4px] h-3.5 w-3.5 text-[#444]" strokeWidth={1.5} />
                <ul role="listbox" aria-label="형식" className="absolute left-0 top-full z-10 w-[356px] border border-[#0078d7] bg-white shadow-[3px_3px_3px_#0008]">
                  {formats.map((f, i) => (
                    <li
                      key={f}
                      role="option"
                      aria-selected={i === format}
                      onMouseEnter={() => setFormat(i)}
                      className={`h-[12px] whitespace-nowrap pl-0.5 text-[13px] leading-[10px] ${i === format ? 'bg-[#0078d7] text-white' : ''}`}
                    >
                      {f}
                    </li>
                  ))}
                </ul>
              </div>
            </div>
            <div className="ml-auto flex w-[86px] flex-col gap-1 pt-[2px]">
              <button className="h-[23px] border-2 border-[#0078d7] bg-[#e1e1e1] pb-1 leading-[17px]">저장(S)</button>
              <button className="h-[23px] border border-[#adadad] bg-[#e1e1e1] pb-0.5 leading-[19px]">취소</button>
            </div>
          </div>

          <fieldset className="ml-0.5 mt-[2px] h-[208px] w-[460px] border border-[#dcdcdc] pl-2 text-[11px]">
            <legend className="pr-1 leading-4">저장 옵션</legend>
            <p className="h-[63px] border-b border-[#a0a0a0] leading-4">저장:</p>
            <p className="h-[52px] border-b border-[#a0a0a0] pt-1.5 leading-4">색상:</p>
            <div className="mt-3 flex items-center gap-1 text-[#838383]">
              <span className="relative h-[13px] w-[13px]">
                <input id="thumbnail" type="checkbox" disabled defaultChecked className="block h-[13px] w-[13px] appearance-none border border-[#c4c4c4] bg-[#f8f8f8]" />
                <svg width="13" height="13" viewBox="0 0 13 13" fill="none" className="pointer-events-none absolute inset-0">
                  <path d="M3 6.500l2.500 3 5-6" stroke="#b0b0b0" strokeWidth="1.500" />
                </svg>
              </span>
              <label htmlFor="thumbnail" className="text-[12px] leading-4">축소판(T)</label>
            </div>
            <div className="mt-3 h-[29px] border border-[#a0a0a0] border-b-white" />
          </fieldset>
        </div>
      </div>
      <svg width="9" height="9" viewBox="0 0 9 9" className="absolute bottom-[2px] right-[2px]">
        <path d="M6 0h2v2H6zM3 3h2v2H3zM6 3h2v2H6zM0 6h2v2H0zM3 6h2v2H3zM6 6h2v2H6z" fill="#b8b8b8" />
      </svg>
    </div>
  )
}

/* ---------- taskbar ---------- */

const apps = [
  { name: 'Photoshop', bar: 'active', icon: <><rect x="2.500" y="1.500" width="20" height="19" fill="#0a0a50" stroke="#8fb8f4" strokeWidth="1.500" /><text x="12.500" y="16" textAnchor="middle" fontFamily="Open Sans" fontWeight="bold" fontSize="12" fill="#8fc0ff">Ps</text></> },
  { name: '캡처 도구', bar: 'open', icon: <><ellipse cx="12" cy="8" rx="11" ry="6" transform="rotate(-25 12 8)" fill="#e8e8ee" stroke="#b94a4a" /><path d="M12 10l8-6M12 10l1-6" stroke="#999" /><path d="M14 11l4 7M20 12l-4 6" stroke="#5aa0d0" strokeWidth="1.500" /><circle cx="14.500" cy="20" r="2.500" stroke="#4a90d0" strokeWidth="1.500" /><circle cx="20.500" cy="18.500" r="2.500" stroke="#4a90d0" strokeWidth="1.500" /></> },
  { name: 'FileZilla', icon: <><rect x="1" y="0" width="23" height="23" rx="1" fill="#b00012" /><path d="M6 18L8.500 4.500H16M7.500 10.500h6" stroke="#fff" strokeWidth="2.800" /><path d="M12 10.500h8l-7 8h7" stroke="#fff" strokeWidth="2.500" /></> },
  { name: 'Chrome', bar: 'open', icon: <><circle cx="12" cy="12" r="11" fill="#fbc116" /><path d="M12 12L2.500 6.500A11 11 0 0121.500 6.500H12z" fill="#e33b2e" /><path d="M12 12L2.500 6.500A11 11 0 0012 23l4.500-8.500z" fill="#2da94f" /><circle cx="12" cy="12" r="5.500" fill="#fff" /><circle cx="12" cy="12" r="4.300" fill="#3f7de8" /></> },
  { name: '카메라', bar: 'open', icon: <><circle cx="12" cy="12" r="11" fill="#6c8fd4" stroke="#5575b8" /><path d="M5 8h3l1-1h4l1 1h5v9H5z" fill="#fff" /><circle cx="13.500" cy="12.500" r="3" fill="#4468b8" /></> },
  { name: '파일 탐색기', bar: 'open', icon: <><path d="M2 3h8l2 2h11v16H2z" fill="#fbd35c" /><path d="M2 3h8l2 2H2z" fill="#e0a422" /><path d="M6 21v-7h14v7h-4v-3h-6v3z" fill="#3a8fd8" /></> },
  { name: 'Edge', icon: <><circle cx="12" cy="12" r="11" fill="#0f6fc6" /><path d="M3 6Q6 1 12 1q10 0 11 9 0 6-6 6-4-1-2-3 1-5-4-6-5-1-8-1z" fill="#3ecb9b" /><path d="M1 12Q1 5 7 5q6 0 8 5-5 1-4 5 2 6 10 4Q14 26 5 21 1 17 1 12z" fill="#1b8ad8" /></> },
  { name: 'Internet Explorer', icon: <><circle cx="12" cy="12.500" r="7.500" stroke="#5cc0f0" strokeWidth="4" /><path d="M6 13h16" stroke="#5cc0f0" strokeWidth="3" /><path d="M15 15h8v3h-6z" fill="#24343f" /><path d="M2 22Q0 17 9 9T22 2q2 1 0 5" stroke="#f5c431" strokeWidth="1.800" /></> },
  { name: '사진', bar: 'open', icon: <><rect x="1" y="1" width="22" height="22" fill="#2c84d4" /><path d="M1 19l8-9 9 13H1z" fill="#0e4685" /><path d="M12 14l4-3 7 8v4h-5z" fill="#1b5da3" /><circle cx="18" cy="6" r="2" fill="#fff" /></> },
  { name: '백신', bar: 'open', icon: <><path d="M1 1h5l1 12 8-12h5L8 23H3z" fill="#25d58c" /><path d="M16 2h9l-6 7h5l-6 7h4L11 23l5-8h-4l4-6h-4z" fill="#25d58c" /></> },
]

const bars = {
  active: 'border-b-2 border-[#76b9ed] bg-[#56606a]',
  open: 'after:absolute after:bottom-0 after:left-[4px] after:h-[2px] after:w-[40px] after:bg-[#76b9ed]',
}

const Taskbar = () => (
  <footer className="flex h-10 shrink-0 items-center bg-linear-to-r from-[#213541] to-[#1c2944] text-white">
    <button aria-label="시작" className="flex h-full w-12 items-center justify-center">
      <Svg w={16} h={16}><path d="M0 2.500l7-1v6H0zM8 1.300L16 0v7.500H8zM0 8.500h7v6l-7-1zM8 8.500h8V16l-8-1.300z" fill="#fff" /></Svg>
    </button>
    <div className="flex h-full w-[344px] items-center border-t border-[#555] bg-[#f2f2f2] pl-3">
      <Svg w={17} h={17}><circle cx="10.500" cy="6.500" r="5" stroke="#222" strokeWidth="1.300" /><path d="M7 10.500l-6 6" stroke="#222" strokeWidth="1.300" /></Svg>
      <input aria-label="검색" placeholder="검색하려면 여기에 입력하십시" className="ml-[11px] flex-1 bg-transparent pb-0.5 text-[15px] text-black outline-none placeholder:text-[#3a3a3a]" />
    </div>
    <button aria-label="작업 보기" className="flex h-full w-[51px] items-center justify-start pl-4">
      <Svg w={17} h={16}><path d="M1 0v3.500h10V0M1 16v-3.500h10V16M1.500 6h9v4h-9zM14.500 0v16" stroke="#eee" /><path d="M13 4h3v3h-3z" fill="#eee" /></Svg>
    </button>
    {apps.map((a) => (
      <button key={a.name} aria-label={a.name} className={`relative mr-px flex h-full w-12 items-center justify-center ${a.bar ? bars[a.bar] : ''}`}>
        <Svg w={25} h={24}>{a.icon}</Svg>
      </button>
    ))}
    <div className="ml-auto flex h-full items-center">
      <Svg w={24} h={24}>
        <path d="M16 3q8 3 6 12-4 8-12 6-5-2-5-5 11 1 11-13z" fill="#fbc02d" />
        <path d="M3 11q-3-4 1-5 1-5 6-3 4 0 4 4 3 4-1 4z" fill="#dfe8f5" />
      </Svg>
      <span className="ml-2 pb-0.5 text-[15px]">24°C</span>
      <span className="ml-2 pb-0.5 text-[15px]">대체로 맑음</span>
      <ChevronUp className="ml-3.5 h-[18px] w-[18px]" strokeWidth={1.5} />
      <Svg w={14} h={16} className="ml-2">
        <path d="M2 1.500q4-1.500 8 0M2 14.500q4 1.500 8 0" stroke="#fff" />
        <rect x="1.500" y="4.500" width="8" height="7" rx="1" stroke="#fff" strokeWidth="1.300" />
        <path d="M10 7l3-2v6l-3-2" stroke="#fff" />
      </Svg>
      <Svg w={17} h={14} className="ml-2">
        <path d="M1 5h3l4-4v12L4 9H1z" stroke="#fff" strokeWidth="1.200" />
        <path d="M10 5q1.500 2 0 4" stroke="#fff" />
        <path d="M12 3q3 4 0 8M14 1.500q4 5.500 0 11" stroke="#8797aa" />
      </Svg>
      <span className="ml-2 pb-0.5 text-[19px]">A</span>
      <div className="ml-2.5 w-[72px] pb-0.5 text-center text-[13px] leading-[18px]">
        <div>오후 9:19</div>
        <div>2022-08-24</div>
      </div>
      <button aria-label="알림" className="relative ml-4 h-6 w-6">
        <Svg w={17} h={16}>
          <path d="M0 0h16v12H9l-4 4v-4H0z" fill="#fff" />
          <path d="M3 3.500h10M3 6.500h10M3 9.500h7" stroke="#1c2944" />
        </Svg>
        <span className="absolute -bottom-0.5 -right-0.5 flex h-4 w-4 items-center justify-center rounded-full border border-[#888] bg-[#333] text-[11px]">4</span>
      </button>
      <div className="ml-3 mr-1 h-full w-px bg-[#5a6a80]" />
    </div>
  </footer>
)

export default function App() {
  return (
    <div className="relative flex h-screen w-full flex-col overflow-hidden bg-[#2b2b2b] font-['Noto_Sans_CJK_KR',sans-serif]">
      <MenuBar />
      <OptionsBar />
      <div className="flex min-h-0 flex-1">
        <Toolbar />
        <DocumentArea />
        <IconStrip />
        <Panels />
      </div>
      <Taskbar />
      <SaveDialog />
    </div>
  )
}
